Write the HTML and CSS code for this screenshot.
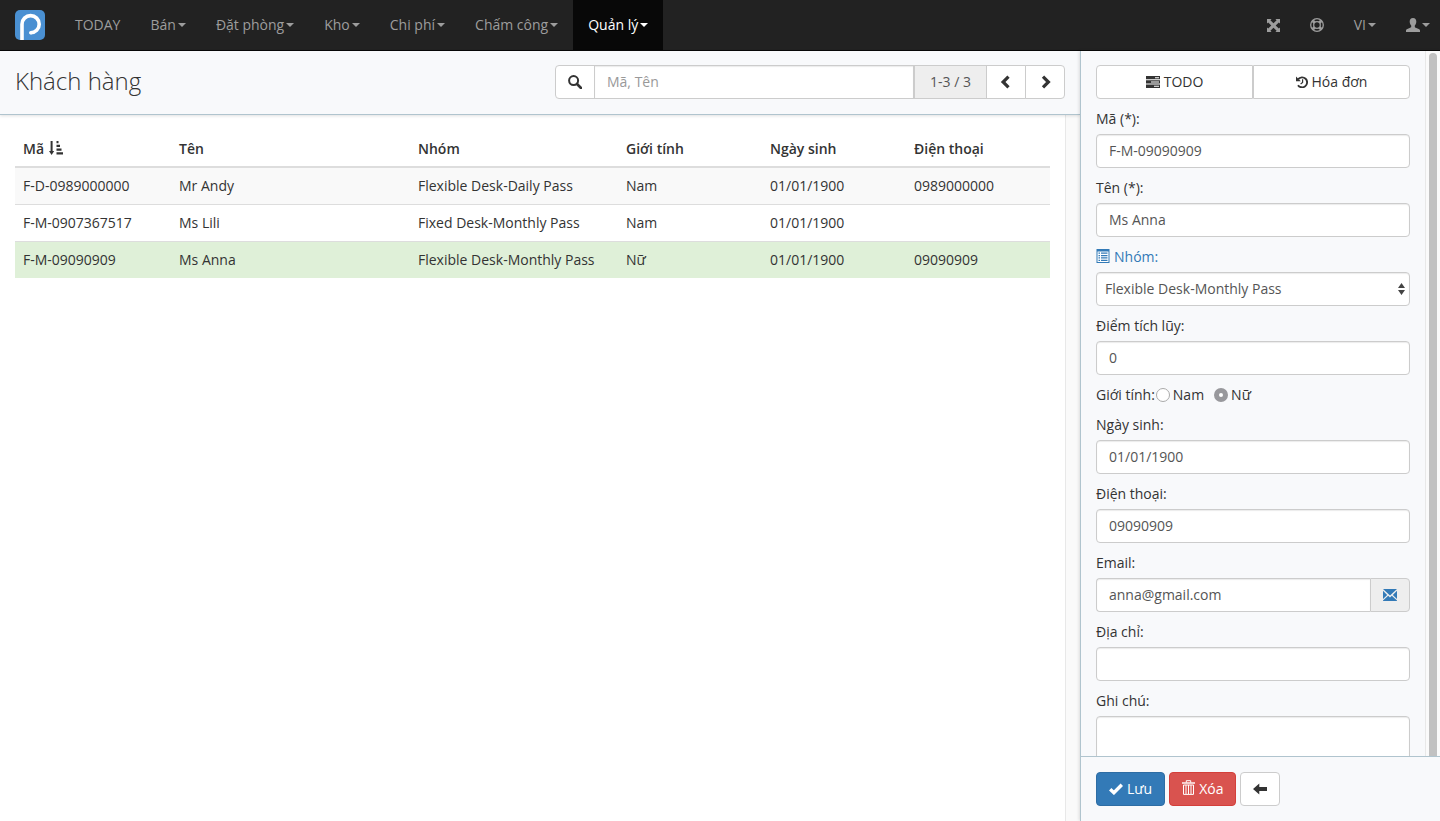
FILE: index.html
```html
<!DOCTYPE html>
<html lang="vi">

<head>
    <meta charset="UTF-8" />
    <meta name="viewport" content="width=device-width, initial-scale=1.0" />
    <title>Khách hàng</title>
    <link rel="stylesheet" href="styles.css">
</head>

<body>
    <nav class="navbar">
        <a class="brand" href="#" aria-label="Trang chủ">
            <svg width="30" height="30" viewBox="0 0 30 30">
                <rect width="30" height="30" rx="5" fill="#4a90d2" />
                <path d="M7 30V14.2a8.6 8.6 0 1 1 8.6 8.6" fill="none" stroke="#fff" stroke-width="3.6" />
                <circle cx="15.8" cy="22.8" r="1.8" fill="#fff" />
            </svg>
        </a>
        <div class="menu">
            <a href="#">TODAY</a>
            <a href="#">Bán<span class="caret"></span></a>
            <a href="#">Đặt phòng<span class="caret"></span></a>
            <a href="#">Kho<span class="caret"></span></a>
            <a href="#">Chi phí<span class="caret"></span></a>
            <a href="#">Chấm công<span class="caret"></span></a>
            <a href="#" class="active">Quản lý<span class="caret"></span></a>
        </div>
        <div class="menu menu-right">
            <a href="#" aria-label="Toàn màn hình">
                <svg width="13" height="13" viewBox="0 0 13 13" fill="currentColor">
                    <path d="M0 0h4.600L3.400 1.200l3.100 3.100 3.100-3.100L8.400 0H13v4.600l-1.200-1.200-3.100 3.100 3.100 3.100L13 8.400V13H8.400l1.200-1.200-3.100-3.100-3.100 3.100L4.600 13H0V8.400l1.200 1.200 3.100-3.100-3.100-3.100L0 4.600z" />
                </svg>
            </a>
            <a href="#" aria-label="Trợ giúp">
                <svg width="14" height="14" viewBox="0 0 14 14" fill="none" stroke="currentColor">
                    <circle cx="7" cy="7" r="6.3" stroke-width="1.3" />
                    <circle cx="7" cy="7" r="3.3" stroke-width="1.3" />
                    <path d="M2.7 2.7l2 2M11.3 2.7l-2 2M2.7 11.3l2-2M11.3 11.3l-2-2" stroke-width="3" />
                </svg>
            </a>
            <a href="#">VI<span class="caret"></span></a>
            <a href="#" class="user" aria-label="Tài khoản">
                <svg width="14" height="14" viewBox="0 0 14 14" fill="currentColor">
                    <path d="M7 0c2.300 0 3.300 1.600 3.300 3.500 0 1.700-.6 3.200-1.500 4.100v1.200c0 .6.4.8 1 1l2.900 1.100c.9.400 1.300.9 1.300 1.700V14H0v-1.400c0-.8.4-1.300 1.300-1.700l2.900-1.100c.6-.2 1-.4 1-1V7.600c-.9-.9-1.500-2.400-1.500-4.100C3.700 1.600 4.700 0 7 0z" />
                </svg>
                <span class="caret"></span>
            </a>
        </div>
    </nav>

    <div class="page">
        <main class="content">
            <header class="content-header">
                <h1>Khách hàng</h1>
                <form class="search">
                    <button type="button" class="btn btn-icon" aria-label="Tìm">
                        <svg width="14" height="14" viewBox="0 0 14 14" fill="none" stroke="currentColor">
                            <circle cx="5.600" cy="5.600" r="4.500" stroke-width="2" />
                            <path d="M9 9l4 4" stroke-width="2.600" stroke-linecap="round" />
                        </svg>
                    </button>
                    <input type="text" class="form-control" placeholder="Mã, Tên" aria-label="Mã, Tên">
                    <span class="addon">1-3 / 3</span>
                    <button type="button" class="btn btn-icon" aria-label="Trang trước">
                        <svg width="14" height="14" viewBox="0 0 14 14" fill="none" stroke="currentColor" stroke-width="3.200">
                            <path d="M9.500 1.600L4.100 7l5.400 5.400" />
                        </svg>
                    </button>
                    <button type="button" class="btn btn-icon" aria-label="Trang sau">
                        <svg width="14" height="14" viewBox="0 0 14 14" fill="none" stroke="currentColor" stroke-width="3.200">
                            <path d="M5 1.600L10.400 7 5 12.400" />
                        </svg>
                    </button>
                </form>
            </header>
            <div class="pane">
                <div class="pane-body">
                    <table class="table">
                        <thead>
                            <tr>
                                <th class="col-code">Mã
                                    <svg width="14" height="14" viewBox="0 0 14 14" fill="currentColor">
                                        <path d="M1.600 0h2v10h1.600l-2.600 4L0 10h1.600zM7.500 0h2v2.300h-2zM7.500 3.700H11V6H7.500zM7.500 7.400h5v2.300h-5zM7.500 11.200H14v2.300H7.500z" />
                                    </svg>
                                </th>
                                <th class="col-name">Tên</th>
                                <th class="col-group">Nhóm</th>
                                <th>Giới tính</th>
                                <th>Ngày sinh</th>
                                <th>Điện thoại</th>
                            </tr>
                        </thead>
                        <tbody>
                            <tr class="striped">
                                <td>F-D-0989000000</td>
                                <td>Mr Andy</td>
                                <td>Flexible Desk-Daily Pass</td>
                                <td>Nam</td>
                                <td>01/01/1900</td>
                                <td>0989000000</td>
                            </tr>
                            <tr>
                                <td>F-M-0907367517</td>
                                <td>Ms Lili</td>
                                <td>Fixed Desk-Monthly Pass</td>
                                <td>Nam</td>
                                <td>01/01/1900</td>
                                <td></td>
                            </tr>
                            <tr class="selected">
                                <td>F-M-09090909</td>
                                <td>Ms Anna</td>
                                <td>Flexible Desk-Monthly Pass</td>
                                <td>Nữ</td>
                                <td>01/01/1900</td>
                                <td>09090909</td>
                            </tr>
                        </tbody>
                    </table>
                </div>
                <div class="scroll-track"></div>
            </div>
        </main>

        <aside class="sidebar">
            <div class="sidebar-body">
                <form class="detail">
                    <div class="btn-group">
                        <button type="button" class="btn">
                            <svg width="14" height="12" viewBox="0 0 14 12">
                                <path d="M0 0h14v3.300H0zM0 4.300h14v3.300H0zM0 8.600h14v3.300H0z" fill="currentColor" />
                                <path d="M9 1.200h4v1H9zM5 5.500h8v1H5zM8 9.800h5v1H8z" fill="#fff" />
                            </svg>
                            TODO
                        </button>
                        <button type="button" class="btn">
                            <svg width="12" height="12" viewBox="0 0 12 12" fill="none" stroke="currentColor">
                                <path d="M2.200 3.200A5 5 0 1 1 2 9.200" stroke-width="1.900" />
                                <path d="M0 .4v4.800h4.800z" fill="currentColor" stroke="none" />
                                <path d="M6.600 3.200v3.300L4.600 8" stroke-width="1.200" />
                            </svg>
                            Hóa đơn
                        </button>
                    </div>
                    <div class="form-group">
                        <label for="ma">Mã (*):</label>
                        <input type="text" class="form-control" id="ma" value="F-M-09090909">
                    </div>
                    <div class="form-group">
                        <label for="ten">Tên (*):</label>
                        <input type="text" class="form-control" id="ten" value="Ms Anna">
                    </div>
                    <div class="form-group">
                        <label for="nhom" class="label-link">
                            <svg width="14" height="16" viewBox="0 0 14 16">
                                <path d="M.5 0h13v14H.5z" fill="currentColor" />
                                <path d="M1.500 2.500h11V13h-11z" fill="#fff" />
                                <path d="M2.500 3.500H4v1.300H2.500zM5 3.500h6.500v1.300H5zM2.500 5.900H4v1.300H2.500zM5 5.900h6.500v1.300H5zM2.500 8.300H4v1.300H2.500zM5 8.300h6.500v1.300H5zM2.500 10.700H4V12H2.500zM5 10.700h6.500V12H5z" fill="currentColor" />
                            </svg>
                            Nhóm:
                        </label>
                        <div class="select">
                            <select class="form-control" id="nhom">
                                <option>Flexible Desk-Monthly Pass</option>
                            </select>
                            <svg width="7" height="12" viewBox="0 0 7 12" fill="#444">
                                <path d="M3.500 0L7 5H0zM0 7h7l-3.500 5z" />
                            </svg>
                        </div>
                    </div>
                    <div class="form-group">
                        <label for="diem">Điểm tích lũy:</label>
                        <input type="text" class="form-control" id="diem" value="0">
                    </div>
                    <div class="radio-row">
                        <span>Giới tính:</span>
                        <label><input type="radio" name="gioitinh">Nam</label>
                        <label><input type="radio" name="gioitinh" checked>Nữ</label>
                    </div>
                    <div class="form-group">
                        <label for="ngaysinh">Ngày sinh:</label>
                        <input type="text" class="form-control" id="ngaysinh" value="01/01/1900">
                    </div>
                    <div class="form-group">
                        <label for="dienthoai">Điện thoại:</label>
                        <input type="text" class="form-control" id="dienthoai" value="09090909">
                    </div>
                    <div class="form-group">
                        <label for="email">Email:</label>
                        <div class="input-group">
                            <input type="text" class="form-control" id="email" value="anna@gmail.com">
                            <a class="addon-mail" href="#" aria-label="Gửi email">
                                <svg width="14" height="12" viewBox="0 0 14 12" fill="currentColor">
                                    <path d="M0 0h14L7 6.600zM0 1.800l4.200 4.100L0 10zM14 1.800v8.200L9.800 5.900zM0 12v-.4l5.200-4.900L7 8.400l1.800-1.700 5.200 4.900v.4z" />
                                </svg>
                            </a>
                        </div>
                    </div>
                    <div class="form-group">
                        <label for="diachi">Địa chỉ:</label>
                        <input type="text" class="form-control" id="diachi">
                    </div>
                    <div class="form-group">
                        <label for="ghichu">Ghi chú:</label>
                        <textarea class="form-control" id="ghichu"></textarea>
                    </div>
                </form>
                <div class="scroll-track">
                    <div class="scroll-thumb"></div>
                </div>
            </div>
            <footer class="sidebar-footer">
                <button type="button" class="btn btn-primary">
                    <svg width="14" height="12" viewBox="0 0 14 12" fill="none" stroke="currentColor" stroke-width="3.400">
                        <path d="M1.200 6.200l3.700 3.500 7.900-8" />
                    </svg>
                    Lưu
                </button>
                <button type="button" class="btn btn-danger">
                    <svg width="13" height="18" viewBox="0 0 13 18" fill="none" stroke="currentColor">
                        <path d="M0 3h13" stroke-width="1.400" />
                        <path d="M4.300 2.600V.7h4.400v1.900M1.500 5v9.400h10V5M1.500 5h10M4 5v9M6.500 5v9M9 5v9" />
                    </svg>
                    Xóa
                </button>
                <button type="button" class="btn btn-icon" aria-label="Quay lại">
                    <svg width="14" height="12" viewBox="0 0 14 12" fill="currentColor">
                        <path d="M0 6l6.300-5.500V4H14v4H6.300v3.500z" />
                    </svg>
                </button>
            </footer>
        </aside>
    </div>
</body>

</html>
```

FILE: styles.css
```css
* {
    box-sizing: border-box;
}

body {
    display: flex;
    flex-direction: column;
    height: 100vh;
    margin: 0;
    overflow: hidden;
    font-family: "Open Sans", "Noto Sans", sans-serif;
    font-size: 14px;
    line-height: 20px;
    color: #333;
    background-color: #fff;
}

button,
input,
select,
textarea {
    font: inherit;
    color: inherit;
}

a {
    color: #337ab7;
    text-decoration: none;
}

svg {
    flex: none;
}

/* navbar */
.navbar {
    display: flex;
    flex: none;
    background-color: #222;
    border-bottom: 1px solid #080808;
}

.brand {
    display: flex;
    padding: 10px 15px;
}

.menu {
    display: flex;
}

.menu-right {
    margin-left: auto;
}

.menu a {
    display: flex;
    align-items: center;
    gap: 2px;
    height: 50px;
    padding: 0 15px;
    color: #9d9d9d;
}

.menu .active {
    color: #fff;
    background-color: #080808;
}

.menu .user {
    padding-right: 10px;
}

.caret {
    border-top: 4px solid;
    border-left: 4px solid transparent;
    border-right: 4px solid transparent;
}

.page {
    display: flex;
    flex: 1;
    min-height: 0;
}

.content {
    display: flex;
    flex-direction: column;
    width: 75%;
}

.content-header {
    z-index: 1;
    display: flex;
    padding: 14px 0 15px;
    background-color: #f8f9fb;
    border-bottom: 1px solid #b0c4ce;
    box-shadow: 0 1px 3px rgba(0, 0, 0, 0.12);
}

h1 {
    width: 50%;
    margin: 0;
    padding: 0 15px;
    font-size: 24px;
    font-weight: 300;
    line-height: 32px;
}

.search {
    display: flex;
    width: 50%;
    padding: 0 15px;
}

.search > * {
    border-radius: 0;
}

.search > :first-child {
    border-radius: 4px 0 0 4px;
}

.search > :last-child {
    border-radius: 0 4px 4px 0;
}

.search .btn + .form-control,
.search .addon + .btn,
.search .btn + .btn {
    margin-left: -1px;
}

.form-control {
    display: block;
    width: 100%;
    min-width: 0;
    height: 34px;
    padding: 5px 12px 7px;
    color: #555;
    background-color: #fff;
    border: 1px solid #ccc;
    border-radius: 4px;
    box-shadow: inset 0 1px 1px rgba(0, 0, 0, 0.08);
}

.form-control::placeholder {
    color: #999;
}

.search .form-control {
    flex: 1;
    border-radius: 0;
}

.search .addon + .btn {
    border-radius: 0;
}

.addon {
    display: flex;
    flex: none;
    align-items: center;
    justify-content: center;
    width: 73px;
    color: #555;
    background-color: #eee;
    border: 1px solid #ccc;
}

.btn {
    display: flex;
    align-items: center;
    justify-content: center;
    gap: 4px;
    height: 34px;
    padding: 0 12px;
    background-color: #fff;
    border: 1px solid #ccc;
    border-radius: 4px;
}

.btn-icon {
    flex: none;
    width: 40px;
}

.btn-primary {
    color: #fff;
    background-color: #337ab7;
    border-color: #2e6da4;
}

.btn-danger {
    color: #fff;
    background-color: #d9534f;
    border-color: #d43f3a;
}

/* customer list */
.pane {
    display: flex;
    flex: 1;
}

.pane-body {
    flex: 1;
    padding: 15px;
}

.scroll-track {
    flex: none;
    width: 15px;
    padding: 2px 2px 0 3px;
    background-color: #fafafa;
    border-left: 1px solid #e8e8e8;
}

.scroll-thumb {
    width: 8px;
    height: 720px;
    background-color: #c1c1c1;
    border-radius: 4px;
}

.table {
    width: 100%;
    table-layout: fixed;
    border-collapse: separate;
    border-spacing: 0;
}

.table th {
    padding: 9px 8px 7px;
    font-weight: 600;
    text-align: left;
    border-bottom: 2px solid #ddd;
}

.table th svg {
    margin-left: 1px;
    vertical-align: -1px;
}

.table td {
    padding: 8px;
    border-bottom: 1px solid #ddd;
}

.table tr:last-child td {
    border-bottom: 0;
}

.col-code {
    width: 156px;
}

.col-name {
    width: 239px;
}

.col-group {
    width: 208px;
}

.striped {
    background-color: #f9f9f9;
}

.selected {
    background-color: #dff0d8;
}

/* customer detail */
.sidebar {
    z-index: 2;
    display: flex;
    flex-direction: column;
    width: 25%;
    background-color: #f8f9fb;
    border-left: 1px solid #b0c4ce;
    box-shadow: -1px 0 3px rgba(0, 0, 0, 0.12);
}

.sidebar-body {
    display: flex;
    flex: 1;
    min-height: 0;
    overflow: hidden;
}

.detail {
    flex: 1;
    padding: 14px 15px;
}

.btn-group {
    display: flex;
    margin-bottom: 10px;
}

.btn-group .btn {
    flex: 1;
}

.btn-group .btn:first-child {
    border-radius: 4px 0 0 4px;
}

.btn-group .btn:last-child {
    border-radius: 0 4px 4px 0;
}

.form-group {
    margin-bottom: 10px;
}

.form-group label {
    display: flex;
    align-items: center;
    gap: 4px;
    margin-bottom: 5px;
}

.form-group .label-link {
    color: #337ab7;
}

.select {
    position: relative;
}

.select select {
    padding: 6px 8px;
    appearance: none;
}

.select svg {
    position: absolute;
    top: 11px;
    right: 5px;
    pointer-events: none;
}

.radio-row {
    display: flex;
    gap: 10px;
    margin-bottom: 10px;
}

.radio-row label {
    display: flex;
    align-items: center;
    gap: 3px;
}

.radio-row span {
    margin-right: -9px;
}

.radio-row input {
    width: 14px;
    height: 14px;
    margin: 0;
    appearance: none;
    background-color: #fff;
    border: 1px solid #aaa;
    border-radius: 50%;
}

.radio-row input:checked {
    border: 5px solid #98989c;
}

.input-group {
    display: flex;
}

.input-group .form-control {
    border-right: 0;
    border-radius: 4px 0 0 4px;
}

.addon-mail {
    display: flex;
    flex: none;
    align-items: center;
    justify-content: center;
    width: 40px;
    background-color: #eee;
    border: 1px solid #ccc;
    border-radius: 0 4px 4px 0;
}

textarea.form-control {
    height: 74px;
    resize: none;
}

.sidebar-footer {
    display: flex;
    gap: 4px;
    padding: 15px;
    border-top: 1px solid #b0c4ce;
}
```
